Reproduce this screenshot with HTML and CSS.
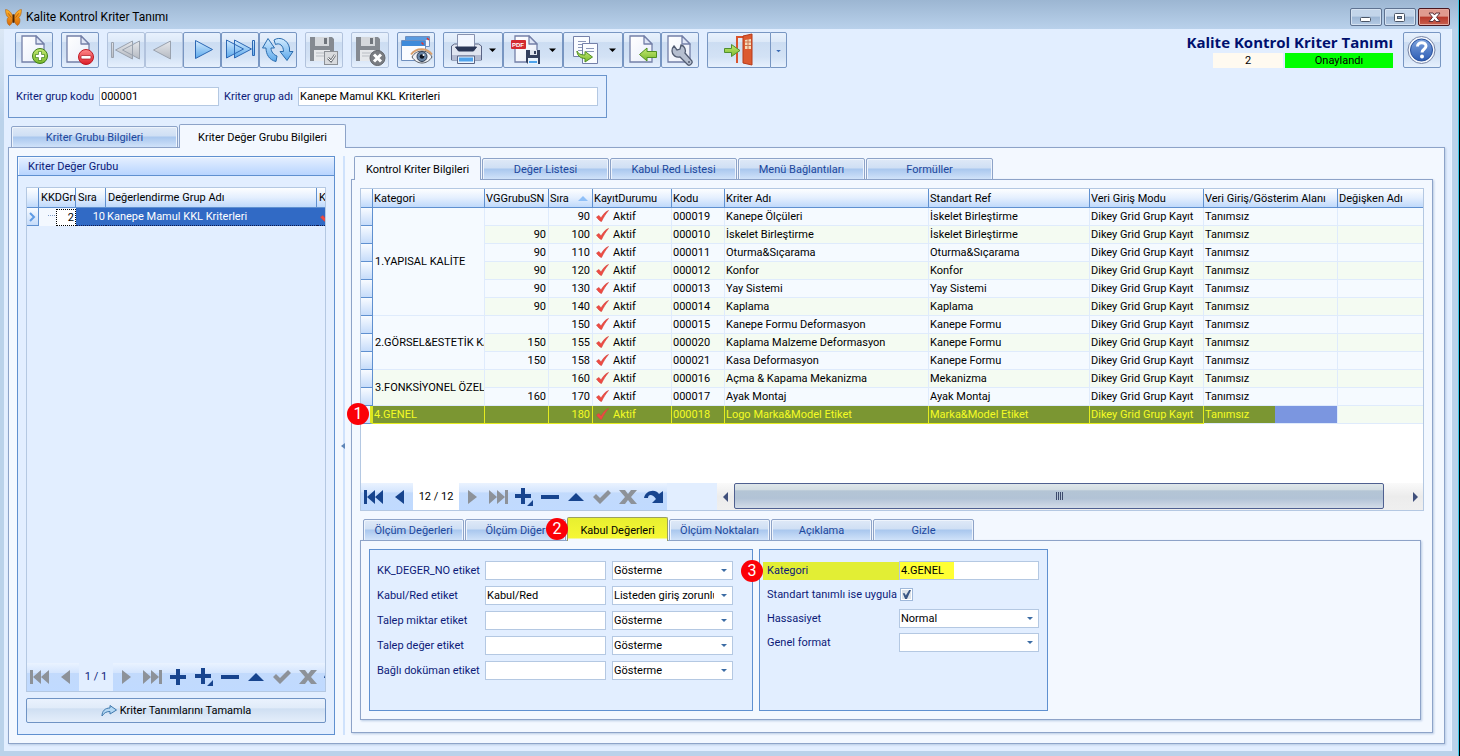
FILE: index.html
```html
<!DOCTYPE html>
<html lang="tr">
<head>
<meta charset="utf-8">
<title>Kalite Kontrol Kriter Tanımı</title>
<link rel="stylesheet" href="styles.css">
</head>
<body>
<svg class="defs" aria-hidden="true">
  <defs>
    <linearGradient id="gPage" x1="0" y1="0" x2="1" y2="1"><stop offset="0" stop-color="#fff"/><stop offset="1" stop-color="#e9eefa"/></linearGradient>
    <linearGradient id="gBlue" x1="0" y1="0" x2="0" y2="1"><stop offset="0" stop-color="#d4ecff"/><stop offset="1" stop-color="#5aa7ea"/></linearGradient>
    <linearGradient id="gGrey" x1="0" y1="0" x2="0" y2="1"><stop offset="0" stop-color="#e6e8ec"/><stop offset="1" stop-color="#b4b9c1"/></linearGradient>
    <linearGradient id="gGreen" x1="0" y1="0" x2="0" y2="1"><stop offset="0" stop-color="#c5ea72"/><stop offset="1" stop-color="#78b82c"/></linearGradient>
    <linearGradient id="gRed" x1="0" y1="0" x2="0" y2="1"><stop offset="0" stop-color="#ff8a8a"/><stop offset="1" stop-color="#dc1c28"/></linearGradient>
    <linearGradient id="gHelp" x1="0" y1="0" x2="0" y2="1"><stop offset="0" stop-color="#7ea3dd"/><stop offset="1" stop-color="#2c5cb4"/></linearGradient>
    <linearGradient id="gWing" x1="0" y1="0" x2="0" y2="1"><stop offset="0" stop-color="#ffb52e"/><stop offset="1" stop-color="#d96a08"/></linearGradient>
  </defs>
  <symbol id="page" viewBox="0 0 24 28"><path d="M1 1h14l8 8v18H1z" fill="url(#gPage)" stroke="#7480a8" stroke-width="1.3"/><path d="M15 1v8h8z" fill="#dfe6f6" stroke="#7480a8" stroke-width="1.3" stroke-linejoin="round"/></symbol>
  <symbol id="n-first" viewBox="0 0 20 14"><path d="M0 0h3v14H0zM11 0v14L3 7zM19 0v14l-8-7z"/></symbol>
  <symbol id="n-prev" viewBox="0 0 20 14"><path d="M14 0v14L5 7z"/></symbol>
  <symbol id="n-next" viewBox="0 0 20 14"><path d="M6 0v14l9-7z"/></symbol>
  <symbol id="n-last" viewBox="0 0 20 14"><path d="M17 0h3v14h-3zM1 0v14l8-7zM9 0v14l8-7z"/></symbol>
  <symbol id="n-plus" viewBox="0 0 20 18"><path d="M8 1h4v6h6v4h-6v6H8v-6H2V7h6z"/></symbol>
  <symbol id="n-plusd" viewBox="0 0 20 18"><path d="M7 0h4v6h6v4h-6v6H7v-6H1V6h6zM19 12v6h-6z"/></symbol>
  <symbol id="n-minus" viewBox="0 0 20 14"><path d="M1 5h18v4H1z"/></symbol>
  <symbol id="n-up" viewBox="0 0 20 14"><path d="M10 3l8 8H2z"/></symbol>
  <symbol id="n-check" viewBox="0 0 20 14"><path d="M1 7l3-3 4 4 8-8 3 3L8 14z"/></symbol>
  <symbol id="n-x" viewBox="0 0 20 14"><path d="M1 0h6l3 4 3-4h6l-6 7 6 7h-6l-3-4-3 4H1l6-7z"/></symbol>
  <symbol id="n-redo" viewBox="0 0 20 14"><path d="M0 8C1 1 11-2 15 4l4-3v12H8l4-4C9 4 4 4 4 8z"/></symbol>
  <symbol id="tick" viewBox="0 0 13 12"><path d="M0.500 7L3 5.500l2 2.500C7 4.500 9.500 1.500 12.500.500 9.500 4 7.500 7.500 5.500 11.500 4.500 11.500 2 9.500.500 7z" fill="#f04a42" stroke="#d04640" stroke-width=".6"/></symbol>
</svg>

<header class="titlebar">
  <svg class="app-icon" viewBox="0 0 16 16"><path d="M7.500 7C6 3 3 .5.500.500c0 3 .5 6 2.500 7.500C1 9.500 2 15 4.500 15.500 6.500 14 7.500 11 8 9c.5 2 1.500 5 3.500 6.500C14 15 15 9.500 13 8c2-1.500 2.500-4.500 2.500-7.500C13 .5 10 3 8.500 7z" fill="url(#gWing)" stroke="#a85a10" stroke-width=".5"/><path d="M8 5v8" stroke="#4a2606" stroke-width="1.800"/><path d="M3 4l3 4M13 4l-3 4" stroke="#b35c0c" stroke-width=".8"/></svg>
  <span class="window-name">Kalite Kontrol Kriter Tanımı</span>
  <div class="window-buttons">
    <button class="win-btn" aria-label="Simge durumuna küçült"><svg viewBox="0 0 30 16"><rect x="9.500" y="8.500" width="10" height="4" rx="1" fill="#fff" stroke="#4a5566"/></svg></button>
    <button class="win-btn" aria-label="Ekranı kapla"><svg viewBox="0 0 30 16"><rect x="9.500" y="4.500" width="10" height="8" rx="1" fill="#fff" stroke="#4a5566"/><rect x="12.500" y="7.500" width="4" height="2" fill="#8aa4c4" stroke="#4a5566"/></svg></button>
    <button class="win-btn win-close" aria-label="Kapat"><svg viewBox="0 0 30 16"><path d="M10 4h4l1.500 2L17 4h4l-3.500 4.300L21 12.500h-4l-1.500-2-1.500 2h-4l3.500-4.200z" fill="#fff" stroke="#5c3038" stroke-width="1"/></svg></button>
  </div>
</header>

<main class="client">
  <div class="toolbar">
    <div class="tools">
      <button class="tool" aria-label="Yeni"><svg viewBox="1 1 36 34"><use href="#page" x="6" y="3" width="24" height="28"/><circle cx="25" cy="24" r="7.500" fill="url(#gGreen)" stroke="#3f7d1c"/><path d="M25 19.500v9M20.500 24h9" stroke="#3f7d1c" stroke-width="4"/><path d="M25 20v8M21 24h8" stroke="#fff" stroke-width="2.500"/></svg></button>
      <button class="tool" aria-label="Sil"><svg viewBox="1 1 36 34"><use href="#page" x="5" y="3" width="24" height="28"/><circle cx="25" cy="25" r="7.500" fill="url(#gRed)" stroke="#c01822"/><rect x="20" y="23.500" width="10" height="3.500" rx="1" fill="#fff" stroke="#a81620" stroke-width=".7"/></svg></button>
      <div class="tool-group">
        <button class="tool" disabled aria-label="İlk"><svg viewBox="1 1 36 34"><g fill="url(#gGrey)" stroke="#9aa2ae"><path d="M4.500 10.500h2v15h-2zM25.500 9v18L8.500 18zM32.500 9v18l-17-9z"/></g></svg></button>
        <button class="tool" disabled aria-label="Önceki"><svg viewBox="1 1 36 34"><path d="M25.500 9v18l-17-9z" fill="url(#gGrey)" stroke="#9aa2ae"/></svg></button>
        <button class="tool" aria-label="Sonraki"><svg viewBox="1 1 36 34"><path d="M12.500 8.500v18l17-9z" fill="url(#gBlue)" stroke="#2c68b4"/></svg></button>
        <button class="tool" aria-label="Son"><svg viewBox="1 1 36 34"><g fill="url(#gBlue)" stroke="#2c68b4"><path d="M5.500 8v18l17-9zM13.500 8v18l17-9zM31.500 8.500h2v15h-2z"/></g></svg></button>
        <button class="tool" aria-label="Yenile"><svg viewBox="1 1 36 34"><g fill="url(#gBlue)" stroke="#2a6cae"><path d="M9 6.500L15.500 16H12c0 4 3 7 6 8l-1 5.500C10 28 7 22 7 16H3.500z"/><path d="M15 8c6-4 14 0 15.500 8v3.500H34l-6 9-7-9h3.500c0-6-4-9-8-7z"/></g></svg></button>
      </div>
      <button class="tool" disabled aria-label="Kaydet"><svg viewBox="1 1 36 34"><path d="M5 5h22l2 2v22H5z" fill="#858a91"/><path d="M10 5h14v9H10z" fill="#d5d8dc"/><path d="M19 6h3v6h-3z" fill="#70757c"/><path d="M9 18h16v11H9z" fill="#e6e8eb"/><path d="M11 21h12M11 24h12" stroke="#b9bdc3"/><rect x="19.500" y="19.500" width="13" height="13" fill="#d9dbde" stroke="#8c9096"/><path d="M23 26l3 3 4-6" fill="none" stroke="#6e7278" stroke-width="2.500"/><path d="M23 26l3 3 4-6" fill="none" stroke="#fff"/></svg></button>
      <button class="tool" disabled aria-label="Vazgeç"><svg viewBox="1 1 36 34"><path d="M5 5h22l2 2v22H5z" fill="#858a91"/><path d="M10 5h14v9H10z" fill="#d5d8dc"/><path d="M19 6h3v6h-3z" fill="#70757c"/><path d="M9 18h16v11H9z" fill="#e6e8eb"/><path d="M11 21h12M11 24h12" stroke="#b9bdc3"/><circle cx="26.500" cy="26" r="7.500" fill="#7a7d82" stroke="#63666b"/><path d="M23 22.500l7 7M30 22.500l-7 7" stroke="#fff" stroke-width="3"/></svg></button>
      <button class="tool" aria-label="İzle"><svg viewBox="1 1 36 34"><path d="M8.500 4.500h24v10h-24z" fill="#eef4fd" stroke="#6f8fbe"/><path d="M9 5h23v3H9z" fill="#5a9be0"/><path d="M4.500 8.500h24v20h-24z" fill="#fafcff" stroke="#6f8fbe"/><path d="M5 9h23v5H5z" fill="#3f8bda"/><path d="M24.500 10.500l2 2M30 6l2 2" stroke="#e6352c" stroke-width="1.500"/><path d="M15 25c4-8 16-8 20 0-5 8-15 8-20 0z" fill="#eef1f6" stroke="#55595f"/><path d="M14 22.500c5-7 16-7 21 0" fill="none" stroke="#d9a06c" stroke-width="2"/><circle cx="25" cy="24.500" r="5" fill="#6a86a6" stroke="#2d3b50"/><circle cx="25" cy="24.500" r="2.300" fill="#0e1420"/><circle cx="26.500" cy="23" r="1" fill="#fff"/></svg></button>
      <div class="tool-group">
        <button class="tool tool-wide" aria-label="Yazdır"><svg viewBox="1 1 58 34"><path d="M8.500 14l3-2h24l3 2v14h-30z" fill="#dfe4f0" stroke="#5a6484"/><path d="M14.500 2.500h17v13h-17z" fill="#f2f6ff" stroke="#8791ae"/><path d="M12.500 15h21l-3 4h-15z" fill="#2a3656" stroke="#2a3656"/><path d="M9 23h29v5H9z" fill="#b3bad0"/><path d="M14.500 24h17v7.500h-17z" fill="#eaf4ff" stroke="#5a6484"/><path d="M16 25.500h14v4H16z" fill="#4ea3ec"/><path d="M46 16.500h7l-3.500 3.500z" fill="#000"/></svg></button>
        <button class="tool tool-wide" aria-label="PDF kaydet"><svg viewBox="1 1 58 34"><use href="#page" x="11" y="3" width="24" height="28"/><rect x="8" y="8" width="15" height="9" rx="1" fill="#d32a30"/><text x="9" y="15" class="pdf-mark">PDF</text><path d="M23 18h14v14H25l-2-2z" fill="#33405f"/><path d="M27 18h7v5h-7z" fill="#dfe5f0"/><path d="M31 19h2v3h-2z" fill="#33405f"/><path d="M25 26h10v6H25z" fill="#e9f4ff"/><path d="M26 29h8v2h-8z" fill="#4ea3ec"/><path d="M46 16.500h7l-3.500 3.500z" fill="#000"/></svg></button>
        <button class="tool tool-wide" aria-label="Kopyala"><svg viewBox="1 1 58 34"><path d="M10.500 4.500h16v20h-16z" fill="#fafcff" stroke="#7480a8"/><path d="M15 9.500h8M15 12.500h8M15 15.500h8M15 18.500h4" stroke="#8b97b8"/><path d="M19.500 11.500h15v20h-15z" fill="#fafcff" stroke="#7480a8"/><path d="M23 16.500h8M23 19.500h8" stroke="#8b97b8"/><path d="M14 19c1 3 4 4 8 4v-3.500l7.500 5.500-7.500 5v-3.500c-5 0-8-3.500-8-7.500z" fill="url(#gGreen)" stroke="#4f8f20"/><path d="M46 16.500h7l-3.500 3.500z" fill="#000"/></svg></button>
        <button class="tool" aria-label="Aktar"><svg viewBox="1 1 36 34"><use href="#page" x="6" y="3" width="24" height="28"/><path d="M16.500 22.500l7.500-6.500v3.500h9.500v6H24V29z" fill="url(#gGreen)" stroke="#4f8f20"/></svg></button>
        <button class="tool" aria-label="Ayarlar"><svg viewBox="1 1 36 34"><use href="#page" x="6" y="3" width="24" height="28"/><path d="M13 14l3 4 3-1 1-4c4 1 5 5 4 8l7 8c1 2-2 5-4 4l-8-8c-4 1-8-2-8-6 0-2 1-4 2-5z" fill="#b6bfd0" stroke="#505a70" stroke-width="1.300"/><circle cx="28" cy="30" r="1" fill="#505a70"/></svg></button>
      </div>
      <div class="tool-group split">
        <button class="tool tool-exit" aria-label="Çıkış"><svg viewBox="1 1 62 34"><path d="M30 31V5h13" fill="none" stroke="#d9532c" stroke-width="2"/><path d="M36 4l9-2v31l-9-2z" fill="#dc5a30" stroke="#b83a18"/><path d="M38 8l6-1v10h-6z" fill="#f6d9b8"/><path d="M41 7v10M38 10h6M38 13.500h6" stroke="#c9734c"/><path d="M17.500 16.500h7v-4l8.500 6-8.500 6v-4h-7z" fill="url(#gGreen)" stroke="#4f9030"/></svg></button>
        <button class="tool tool-drop" aria-label="Çıkış seçenekleri"><svg viewBox="0 0 16 34"><path d="M5.500 17h5L8 19.500z" fill="#3c6cb4"/></svg></button>
      </div>
    </div>
    <div class="record-info">
      <h1 class="record-title">Kalite Kontrol Kriter Tanımı</h1>
      <div class="record-state"><span class="record-no">2</span><span class="record-ok">Onaylandı</span></div>
    </div>
    <button class="tool help" aria-label="Yardım"><svg viewBox="1 1 36 34"><circle cx="18.500" cy="18" r="13.500" fill="#f4f7fd" stroke="#7784a4"/><circle cx="18.500" cy="18" r="11" fill="url(#gHelp)" stroke="#28509c"/><path d="M14.500 14.500c0-5 8.500-5 8.500-.5 0 3.500-4 3-4 6.500" fill="none" stroke="#fff" stroke-width="3"/><circle cx="19" cy="24.500" r="2" fill="#fff"/></svg></button>
  </div>

  <section class="group-key">
    <label for="kod">Kriter grup kodu</label><input id="kod" class="field" value="000001">
    <label for="adi">Kriter grup adı</label><input id="adi" class="field" value="Kanepe Mamul KKL Kriterleri">
  </section>

  <nav class="tabs tabs-main">
    <button class="tab">Kriter Grubu Bilgileri</button><button class="tab active">Kriter Değer Grubu Bilgileri</button>
  </nav>

  <div class="sheet main-sheet">
    <section class="side">
      <h2 class="side-head">Kriter Değer Grubu</h2>
      <div class="side-body">
        <div class="side-grid">
          <table class="grid group-table">
            <colgroup><col class="s-ind"><col class="s-key"><col class="s-sira"><col><col class="s-k"></colgroup>
            <thead><tr><th></th><th>KKDGrubu</th><th>Sıra</th><th>Değerlendirme Grup Adı</th><th>KayıtDurumu</th></tr></thead>
            <tbody><tr><td class="ind"><svg viewBox="0 0 10 10"><path d="M3 1l4 4-4 4" fill="none" stroke="#5f9be4" stroke-width="2"/></svg></td><td class="node"><span>2</span></td><td class="num">10</td><td>Kanepe Mamul KKL Kriterleri</td><td><svg class="tick"><use href="#tick"/></svg></td></tr></tbody>
          </table>
          <div class="pager">
            <button class="nb off" aria-label="İlk"><svg><use href="#n-first"/></svg></button><button class="nb off" aria-label="Önceki"><svg><use href="#n-prev"/></svg></button>
            <span class="page-no">1 / 1</span>
            <button class="nb off" aria-label="Sonraki"><svg><use href="#n-next"/></svg></button><button class="nb off" aria-label="Son"><svg><use href="#n-last"/></svg></button><button class="nb" aria-label="Ekle"><svg class="tall"><use href="#n-plus"/></svg></button><button class="nb" aria-label="Alt ekle"><svg class="tall"><use href="#n-plusd"/></svg></button><button class="nb" aria-label="Sil"><svg><use href="#n-minus"/></svg></button><button class="nb" aria-label="Düzenle"><svg><use href="#n-up"/></svg></button><button class="nb off" aria-label="Onayla"><svg><use href="#n-check"/></svg></button><button class="nb off" aria-label="İptal"><svg><use href="#n-x"/></svg></button><button class="nb" aria-label="Yenile"><svg><use href="#n-redo"/></svg></button>
          </div>
        </div>
        <button class="complete"><svg viewBox="0 0 16 12"><path d="M1 11c0-5 3-8 8-8V.5L15.500 5 9 9V6.500C5 6.500 3 8 1 11z" fill="#b4d8f4" stroke="#3f78ac"/></svg>Kriter Tanımlarını Tamamla</button>
      </div>
    </section>

    <div class="splitter"><svg viewBox="0 0 4 6"><path d="M4 0v6L0 3z" fill="#5f86b8"/></svg></div>

    <section class="detail">
      <nav class="tabs tabs-detail">
        <button class="tab active">Kontrol Kriter Bilgileri</button><button class="tab">Değer Listesi</button><button class="tab">Kabul Red Listesi</button><button class="tab">Menü Bağlantıları</button><button class="tab">Formüller</button>
      </nav>
      <div class="sheet detail-sheet">
        <div class="criteria">
          <span class="badge badge-1">1</span>
          <table class="grid criteria-table">
            <colgroup><col class="c-ind"><col class="c-kat"><col class="c-vg"><col class="c-sira"><col class="c-durum"><col class="c-kodu"><col class="c-adi"><col class="c-ref"><col class="c-modu"><col class="c-alan"><col></colgroup>
            <thead><tr><th></th><th>Kategori</th><th>VGGrubuSN</th><th>Sıra<i class="sort"></i></th><th>KayıtDurumu</th><th>Kodu</th><th>Kriter Adı</th><th>Standart Ref</th><th>Veri Giriş Modu</th><th>Veri Giriş/Gösterim Alanı</th><th>Değişken Adı</th></tr></thead>
            <tbody>
              <tr><td class="ind"></td><td class="cat" rowspan="6">1.YAPISAL KALİTE</td><td class="num"></td><td class="num">90</td><td><svg class="tick"><use href="#tick"/></svg>Aktif</td><td>000019</td><td>Kanepe Ölçüleri</td><td>İskelet Birleştirme</td><td>Dikey Grid Grup Kayıt</td><td>Tanımsız</td><td></td></tr>
              <tr><td class="ind"></td><td class="num">90</td><td class="num">100</td><td><svg class="tick"><use href="#tick"/></svg>Aktif</td><td>000010</td><td>İskelet Birleştirme</td><td>İskelet Birleştirme</td><td>Dikey Grid Grup Kayıt</td><td>Tanımsız</td><td></td></tr>
              <tr><td class="ind"></td><td class="num">90</td><td class="num">110</td><td><svg class="tick"><use href="#tick"/></svg>Aktif</td><td>000011</td><td>Oturma&amp;Sıçarama</td><td>Oturma&amp;Sıçarama</td><td>Dikey Grid Grup Kayıt</td><td>Tanımsız</td><td></td></tr>
              <tr><td class="ind"></td><td class="num">90</td><td class="num">120</td><td><svg class="tick"><use href="#tick"/></svg>Aktif</td><td>000012</td><td>Konfor</td><td>Konfor</td><td>Dikey Grid Grup Kayıt</td><td>Tanımsız</td><td></td></tr>
              <tr><td class="ind"></td><td class="num">90</td><td class="num">130</td><td><svg class="tick"><use href="#tick"/></svg>Aktif</td><td>000013</td><td>Yay Sistemi</td><td>Yay Sistemi</td><td>Dikey Grid Grup Kayıt</td><td>Tanımsız</td><td></td></tr>
              <tr><td class="ind"></td><td class="num">90</td><td class="num">140</td><td><svg class="tick"><use href="#tick"/></svg>Aktif</td><td>000014</td><td>Kaplama</td><td>Kaplama</td><td>Dikey Grid Grup Kayıt</td><td>Tanımsız</td><td></td></tr>
              <tr><td class="ind"></td><td class="cat" rowspan="3">2.GÖRSEL&amp;ESTETİK KALİTE</td><td class="num"></td><td class="num">150</td><td><svg class="tick"><use href="#tick"/></svg>Aktif</td><td>000015</td><td>Kanepe Formu Deformasyon</td><td>Kanepe Formu</td><td>Dikey Grid Grup Kayıt</td><td>Tanımsız</td><td></td></tr>
              <tr><td class="ind"></td><td class="num">150</td><td class="num">155</td><td><svg class="tick"><use href="#tick"/></svg>Aktif</td><td>000020</td><td>Kaplama Malzeme Deformasyon</td><td>Kanepe Formu</td><td>Dikey Grid Grup Kayıt</td><td>Tanımsız</td><td></td></tr>
              <tr><td class="ind"></td><td class="num">150</td><td class="num">158</td><td><svg class="tick"><use href="#tick"/></svg>Aktif</td><td>000021</td><td>Kasa Deformasyon</td><td>Kanepe Formu</td><td>Dikey Grid Grup Kayıt</td><td>Tanımsız</td><td></td></tr>
              <tr><td class="ind"></td><td class="cat" rowspan="2">3.FONKSİYONEL ÖZELLİKLER</td><td class="num"></td><td class="num">160</td><td><svg class="tick"><use href="#tick"/></svg>Aktif</td><td>000016</td><td>Açma &amp; Kapama Mekanizma</td><td>Mekanizma</td><td>Dikey Grid Grup Kayıt</td><td>Tanımsız</td><td></td></tr>
              <tr><td class="ind"></td><td class="num">160</td><td class="num">170</td><td><svg class="tick"><use href="#tick"/></svg>Aktif</td><td>000017</td><td>Ayak Montaj</td><td>Ayak Montaj</td><td>Dikey Grid Grup Kayıt</td><td>Tanımsız</td><td></td></tr>
              <tr class="picked"><td class="ind"></td><td class="on">4.GENEL</td><td class="on num"></td><td class="on num">180</td><td class="on"><svg class="tick"><use href="#tick"/></svg>Aktif</td><td class="on">000018</td><td class="on">Logo Marka&amp;Model Etiket</td><td class="on">Marka&amp;Model Etiket</td><td class="on">Dikey Grid Grup Kayıt</td><td class="on part">Tanımsız</td><td></td></tr>
            </tbody>
          </table>
          <div class="criteria-foot">
            <div class="pager">
              <button class="nb" aria-label="İlk"><svg><use href="#n-first"/></svg></button><button class="nb" aria-label="Önceki"><svg><use href="#n-prev"/></svg></button>
              <span class="page-no">12 / 12</span>
              <button class="nb off" aria-label="Sonraki"><svg><use href="#n-next"/></svg></button><button class="nb off" aria-label="Son"><svg><use href="#n-last"/></svg></button><button class="nb" aria-label="Ekle"><svg class="tall"><use href="#n-plusd"/></svg></button><button class="nb" aria-label="Sil"><svg><use href="#n-minus"/></svg></button><button class="nb" aria-label="Düzenle"><svg><use href="#n-up"/></svg></button><button class="nb off" aria-label="Onayla"><svg><use href="#n-check"/></svg></button><button class="nb off" aria-label="İptal"><svg><use href="#n-x"/></svg></button><button class="nb" aria-label="Yenile"><svg><use href="#n-redo"/></svg></button>
            </div>
            <div class="hscroll">
              <button class="arrow" aria-label="Sola kaydır"><svg viewBox="0 0 6 10"><path d="M5 0v10L0 5z" fill="#40507c"/></svg></button>
              <div class="track"><div class="thumb"><i></i><i></i><i></i><i></i></div></div>
              <button class="arrow" aria-label="Sağa kaydır"><svg viewBox="0 0 6 10"><path d="M1 0v10l5-5z" fill="#40507c"/></svg></button>
            </div>
          </div>
        </div>

        <nav class="tabs tabs-values">
          <button class="tab">Ölçüm Değerleri</button><button class="tab">Ölçüm Diğer</button><button class="tab active">Kabul Değerleri<span class="badge badge-2">2</span></button><button class="tab">Ölçüm Noktaları</button><button class="tab">Açıklama</button><button class="tab">Gizle</button>
        </nav>
        <div class="sheet values-sheet">
          <div class="box box-labels">
            <label for="l1">KK_DEGER_NO etiket</label><input id="l1" class="field"><span class="pick"><select class="field" aria-label="KK_DEGER_NO gösterim"><option>Gösterme</option></select></span>
            <label for="l2">Kabul/Red etiket</label><input id="l2" class="field" value="Kabul/Red"><span class="pick"><select class="field" aria-label="Kabul/Red gösterim"><option>Listeden giriş zorunlu</option></select></span>
            <label for="l3">Talep miktar etiket</label><input id="l3" class="field"><span class="pick"><select class="field" aria-label="Talep miktar gösterim"><option>Gösterme</option></select></span>
            <label for="l4">Talep değer etiket</label><input id="l4" class="field"><span class="pick"><select class="field" aria-label="Talep değer gösterim"><option>Gösterme</option></select></span>
            <label for="l5">Bağlı doküman etiket</label><input id="l5" class="field"><span class="pick"><select class="field" aria-label="Bağlı doküman gösterim"><option>Gösterme</option></select></span>
          </div>
          <div class="box box-cat">
            <label for="k1" class="marked">Kategori<span class="badge badge-3">3</span></label><input id="k1" class="field marked-field" value="4.GENEL">
            <label for="k2">Standart tanımlı ise uygula</label><input id="k2" type="checkbox" class="check" checked>
            <label for="k3">Hassasiyet</label><span class="pick"><select id="k3" class="field"><option>Normal</option></select></span>
            <label for="k4">Genel format</label><span class="pick"><select id="k4" class="field"><option></option></select></span>
          </div>
        </div>
      </div>
    </section>
  </div>
</main>
</body>
</html>
```
FILE: styles.css
```css
* { box-sizing: border-box; }
body {
  margin: 0;
  min-height: 100vh;
  display: flex;
  flex-direction: column;
  padding-bottom: 5px;
  background: linear-gradient(#dbe7f5, #bad2ea) 0 29px / 4px 92px no-repeat, #bad2ea;
  border-right: 1px solid #000;
  box-shadow: inset -1px 0 #3cc8e8;
  font: 11px/14px Roboto, "DejaVu Sans Condensed", sans-serif;
  color: #000;
}
button, input, select { font: inherit; color: inherit; margin: 0; padding: 0; border: 0; border-radius: 0; }
svg { display: block; flex: none; }
.defs { position: absolute; width: 0; height: 0; }

/* Title bar */
.titlebar { display: flex; align-items: center; gap: 4px; height: 29px; padding: 5px 8px 0 5px; background: linear-gradient(#9cb6d2, #b9d1eb); margin-right: 1px; }
.app-icon { width: 17px; height: 17px; }
.window-name { flex: 1; font: 12px/16px Roboto, "Open Sans", sans-serif; }
.window-buttons { display: flex; gap: 2px; }
.win-btn { width: 32px; height: 18px; border: 1px solid #5f7391; border-radius: 2px; background: linear-gradient(#c3d5ea 45%, #9db7d5 50%, #b5cbe4); box-shadow: inset 0 0 0 1px #d5e2f1; }
.win-btn svg { width: 30px; height: 16px; }
.win-close { border-color: #4a1820; background: linear-gradient(#e09a8e 45%, #b8382a 50%, #c8604e); box-shadow: inset 0 0 0 1px #e6aaa0; }

.client { flex: 1; display: flex; flex-direction: column; margin: 0 7px 0 4px; padding: 3px 7px 7px 4px; background: #e2eeff; box-shadow: inset -1px 0 #e9f2ff; }

/* Toolbar */
.toolbar { display: flex; align-items: flex-start; padding: 0 4px 0 7px; }
.tools { display: flex; gap: 8px; flex: 1; }
.tool-group { display: flex; }
.tool { width: 38px; height: 36px; flex: none; border: 1px solid #7896c2; border-radius: 2px; background: linear-gradient(#e8f1fd, #dde9f8 26%, #ccddf2 28%, #d3e2f5 70%, #e6f0fd); }
.tool svg { width: 36px; height: 34px; }
.tool:disabled { border-color: #b2c3dd; }
.tool-wide { width: 60px; }
.tool-wide svg { width: 58px; }
.tool-exit { width: 63px; border-radius: 2px 0 0 2px; }
.tool-exit svg { width: 62px; }
.split .tool-exit { border-right: 0; }
.tool-drop { width: 17px; border-radius: 0 2px 2px 0; }
.tool-drop svg { width: 15px; }
.pdf-mark { font: bold 6px/6px "Liberation Sans", sans-serif; fill: #fff; }
.record-info { display: flex; flex-direction: column; align-items: flex-end; margin-right: 10px; }
.record-title { margin: 0; font: bold 15px/21px "Open Sans", "Noto Sans", sans-serif; color: #00106e; }
.record-state { display: flex; gap: 2px; text-align: center; line-height: 15px; }
.record-no { width: 70px; background: #fffaf0; }
.record-ok { width: 108px; background: #00ff00; }

/* Fields */
.field { width: 100%; height: 19px; padding: 0 1px; border: 1px solid #b4c8e2; background: #fff; color: #000; min-width: 0; }
label { color: #0c1a78; white-space: nowrap; }
.group-key { display: grid; grid-template-columns: 83px 120px 79px 300px; align-items: center; align-self: flex-start; width: 599px; height: 43px; margin-top: 7px; padding: 0 7px; border: 1px solid #6a94cc; }
.group-key label[for="adi"] { padding-left: 5px; }
.pick { position: relative; display: block; }
.pick select { appearance: none; padding-right: 18px; display: block; }
.pick::after { content: ""; position: absolute; right: 6px; top: 8px; border: 3px solid transparent; border-top-color: #3c6ca4; border-bottom: 0; pointer-events: none; }
.check { appearance: none; width: 13px; height: 13px; border: 1px solid #9fb8da; background: #dfe4ea; box-shadow: inset 0 0 0 1px #fff; display: block; margin: 0 0 0 1px; }
.check:checked::after { content: ""; display: block; width: 9px; height: 9px; margin: 1px; background: #3a5684; clip-path: polygon(8% 35%, 30% 35%, 42% 60%, 80% 0, 100% 0, 55% 100%, 35% 100%); }

/* Tabs */
.tabs { display: flex; align-items: flex-end; gap: 1px; position: relative; z-index: 1; margin-bottom: -1px; }
.tab { height: 22px; border: 1px solid #8da3c8; border-radius: 2px 2px 0 0; background: linear-gradient(#dfe9f7, #cfdff4 45%, #a9c7ee 50%, #d0e2f9); box-shadow: inset 1px 1px #eef4fc, inset -1px 0 #eef4fc; color: #1c479c; padding: 2px 0 0; text-align: center; }
.tab.active { height: 24px; border-bottom: 0; background: #f3f8ff; box-shadow: none; color: #000; position: relative; }
.tabs-main { margin-top: 6px; padding-left: 3px; }
.tabs-main .tab { width: 167px; }
.tabs-detail { padding-left: 3px; }
.tabs-detail .tab { width: 127px; }
.tabs-values { padding-left: 3px; margin-top: 6px; }
.tabs-values .tab { width: 101px; }
.tabs-values .tab.active { background: linear-gradient(#e8ef30, #f6f734 20px, #f3f8ff 21px); border-color: #9aa060; }
.sheet { border: 1px solid #8da3c8; background: #f3f8ff; box-shadow: 1px 1px 2px #b8cae4; }

.main-sheet { flex: 1; display: flex; padding: 8px 11px 8px 8px; }

/* Left panel */
.side { width: 318px; display: flex; flex-direction: column; border: 1px solid #5f90d0; background: #e2eeff; }
.side-head { margin: 0; height: 19px; padding: 3px 10px 0; font-size: 11px; font-weight: normal; color: #0c1a78; background: linear-gradient(#e6f0ff, #b8d5ff); border-bottom: 1px solid #5f90d0; box-shadow: inset 1px 1px #f4f9ff; }
.side-body { flex: 1; display: flex; flex-direction: column; gap: 6px; padding: 11px 8px 11px; }
.side-grid { flex: 1; display: flex; flex-direction: column; justify-content: space-between; border: 1px solid #b4c8e2; overflow: hidden; }
.complete { display: flex; align-items: center; justify-content: center; gap: 3px; height: 25px; border: 1px solid #6f93c4; border-radius: 2px; background: linear-gradient(#eaf2fd, #e0ebf9 40%, #cfdff2 42%, #e4eefb); }
.complete svg { width: 16px; height: 12px; }
.splitter { width: 4px; margin: 0 6px; display: flex; align-items: center; background: linear-gradient(90deg, #f3f8ff 2px, #cfe2fc 2px); }
.splitter svg { width: 4px; height: 6px; }

/* Grids */
.grid { width: 100%; table-layout: fixed; border-spacing: 0; }
.grid th { height: 19px; padding: 1px 1px 0; font-weight: normal; text-align: left; white-space: nowrap; overflow: hidden; background: linear-gradient(#fdfeff, #e4effe 50%, #bfd9fb); border-right: 1px solid #5f90d0; border-bottom: 1px solid #5f90d0; }
.grid th:last-child { border-right: 0; }
.grid td { height: 18px; padding: 1px 1px 0; white-space: nowrap; overflow: hidden; border-right: 1px solid #dfebfc; border-bottom: 1px solid #dfebfc; background: #f5faff; line-height: 16px; }
.grid td.ind { padding: 0; background: linear-gradient(#f8fbff, #c6dcfa); border-right-color: #5f90d0; border-bottom-color: #5f90d0; }
.grid .num { text-align: right; }
.grid .tick { display: inline-block; width: 13px; height: 12px; margin: 0 4px 0 2px; vertical-align: -2px; }

.s-ind { width: 12px; } .s-key { width: 37px; } .s-sira { width: 30px; } .s-k { width: 8px; }
.group-table th { height: 20px; padding-left: 2px; }
.group-table td { height: 17px; background: #316ac5; color: #fff; border-right: 0; border-bottom: 1px dotted #0c1a50; }
.group-table td.ind { border-right: 1px solid #5f90d0; border-bottom: 1px solid #5f90d0; }
.group-table td.ind svg { width: 10px; height: 10px; }
.group-table td.node { background: repeating-linear-gradient(90deg, #7f9cc8 0 1px, transparent 1px 2px) 9px 7px / 8px 1px no-repeat, #f3f8ff; color: #000; padding: 0; border-bottom: 0; }
.node span { display: block; width: 20px; height: 17px; margin-left: auto; padding-right: 1px; line-height: 16px; text-align: right; background: #fff; border: 1px dotted #000; }

.criteria { position: relative; flex: 1; display: flex; flex-direction: column; justify-content: space-between; border: 1px solid #b4c8e2; background: #fff; }
.c-ind { width: 12px; } .c-kat { width: 112px; } .c-vg { width: 64px; } .c-sira { width: 44px; } .c-durum { width: 79px; } .c-kodu { width: 53px; } .c-adi { width: 204px; } .c-ref { width: 161px; } .c-modu { width: 114px; } .c-alan { width: 134px; }
.criteria-table tr:nth-child(even) td:not(.ind, .cat, .on) { background: #f4fbf2; }
.criteria-table td.cat { padding-left: 2px; }
.criteria-table tr:nth-child(10) td.cat { background: #f4fbf2; }
.criteria-table td.num { padding-right: 2px; }
.criteria-table td:last-child, .criteria-table th:last-child { border-right: 0; }
.sort { display: inline-block; margin-left: 9px; border: 5px solid transparent; border-bottom: 5px solid #8fc0f8; border-top: 0; vertical-align: 1px; }
.criteria-table .picked td.on { background: #7b9632; color: #f4fc24; border-color: #e4ec20; }
.criteria-table .picked td.part { background: linear-gradient(90deg, #7b9632 71px, #7b96e0 71px); border-color: #dfebfc; }
.criteria-table .picked td.ind { border-right: 3px solid #dde620; }
.detail { flex: 1; display: flex; flex-direction: column; min-width: 0; margin-bottom: 2px; }
.detail-sheet { flex: 1; display: flex; flex-direction: column; padding: 8px 8px 12px 8px; }

/* Record navigation */
.pager { display: flex; flex: none; height: 28px; background: linear-gradient(#eaf3ff, #d4e5fe 34%, #c2dafc 36%, #c0daff); }
.nb { width: 26px; flex: none; display: flex; align-items: center; justify-content: center; background: none; fill: #17448e; }
.nb svg { width: 20px; height: 14px; }
.nb svg.tall { width: 20px; height: 18px; }
.nb.off { fill: #8d9299; }
.page-no { flex: none; width: 34px; line-height: 28px; text-align: center; background: #e2eeff; color: #0c1a78; }
.criteria-foot { display: flex; height: 27px; background: #e2eeff; }
.criteria-foot .pager { width: 306px; margin-right: 50px; height: 27px; }
.criteria-foot .page-no { width: 46px; background: #fff; color: #000; }
.hscroll { flex: 1; display: flex; background: linear-gradient(#fafafa, #ececec 50%, #efefef); }
.arrow { width: 17px; background: none; display: flex; align-items: center; justify-content: center; }
.arrow svg { width: 6px; height: 10px; }
.track { flex: 1; padding-right: 22px; }
.thumb { height: 26px; display: flex; align-items: center; justify-content: center; gap: 1px; border: 1px solid #4f6090; border-radius: 2px; background: linear-gradient(#dfe7ea, #d2dce2 25%, #b4c5d5 28%, #b2c3d6 60%, #d3dce8); }
.thumb i { width: 1px; height: 8px; background: #3c4a6c; }

/* Value sheet */
.values-sheet { display: flex; align-items: flex-start; gap: 6px; min-height: 180px; margin-right: 3px; padding: 8px; }
.box { display: grid; height: 162px; border: 1px solid #5f90d0; background: #e2eeff; align-content: start; align-items: center; }
.box-labels { width: 384px; padding: 11px 19px 0 7px; grid-template-columns: 108px 121px 127px; grid-auto-rows: 19px; row-gap: 6px; }
.box-labels .pick { padding-left: 6px; }
.box-cat { width: 289px; padding: 11px 8px 0 3px; grid-template-columns: 136px 140px; grid-auto-rows: 19px; row-gap: 5px; }
.box-cat label { padding-left: 4px; }
.box-cat .marked { position: relative; height: 18px; line-height: 18px; background: #e2ee34; }
.box-cat .marked-field { background: linear-gradient(90deg, #ffff34 54px, #fff 54px); }

/* Step markers */
.badge { position: absolute; z-index: 2; width: 22px; height: 22px; border-radius: 50%; background: #fb0007; color: #fff; font: 16px/22px Roboto, sans-serif; text-align: center; }
.badge-1 { left: -14px; top: 214px; }
.badge-2 { left: -22px; top: 0; }
.badge-3 { left: -22px; top: -2px; }
```
